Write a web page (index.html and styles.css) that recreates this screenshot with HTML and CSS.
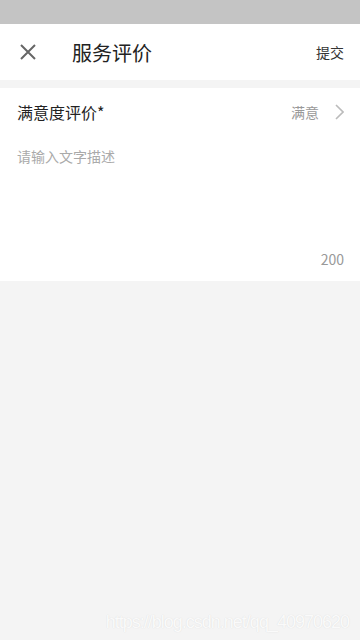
FILE: index.html
```html
<!DOCTYPE html>
<html lang="zh">
<head>
    <meta charset="UTF-8">
    <title>服务评价</title>
    <link rel="stylesheet" href="styles.css">
</head>
<body>
    <div class="status-bar"></div>
    <div class="header">
        <span class="close-btn">
            <svg width="16" height="16" viewBox="0 0 16 16"><path d="M1 1L15 15M15 1L1 15" stroke="#666" stroke-width="2" fill="none"/></svg>
        </span>
        <span class="title">服务评价</span>
        <span class="submit">提交</span>
    </div>
    <div class="panel">
        <div class="row">
            <span class="label">满意度评价*</span>
            <span class="value">满意</span>
            <svg class="arrow" width="10" height="16" viewBox="0 0 10 16"><path d="M2 1L9 8L2 15" stroke="#bbb" stroke-width="1.6" fill="none"/></svg>
        </div>
        <div class="desc">请输入文字描述</div>
        <div class="count">200</div>
    </div>
    <div class="watermark">https://blog.csdn.net/qq_40970620</div>
</body>
</html>
```
FILE: styles.css
```css
body {
    margin: 0;
    width: 360px;
    height: 640px;
    background-color: #F4F4F4;
    font-family: "Noto Sans CJK SC", "Noto Sans", sans-serif;
    position: relative;
    overflow: hidden;
}
.status-bar {
    height: 24px;
    background-color: #C4C4C4;
}
.header {
    height: 56px;
    background-color: #fff;
    display: flex;
    align-items: center;
    padding: 0 16px 0 20px;
}
.close-btn {
    display: flex;
    width: 16px;
    height: 16px;
}
.title {
    margin-left: 36px;
    font-size: 20px;
    color: #222;
    flex: 1;
}
.submit {
    font-size: 14px;
    color: #333;
}
.panel {
    margin-top: 8px;
    background-color: #fff;
    height: 193px;
    padding: 0 16px 0 17px;
    box-sizing: border-box;
}
.row {
    display: flex;
    align-items: center;
    height: 48px;
}
.label {
    font-size: 16px;
    color: #222;
    flex: 1;
}
.value {
    font-size: 14px;
    color: #999;
    margin-right: 15px;
}
.desc {
    margin-top: 10px;
    font-size: 14px;
    color: #aaa;
    height: 103px;
}
.count {
    text-align: right;
    font-size: 14px;
    color: #999;
}
.watermark {
    position: absolute;
    right: 11px;
    bottom: 9px;
    font-family: "Liberation Sans", sans-serif;
    font-size: 18px;
    line-height: 18px;
    letter-spacing: -1px;
    color: #fafafa;
    text-shadow: 0 0 1px #d8d8d8;
}
```
